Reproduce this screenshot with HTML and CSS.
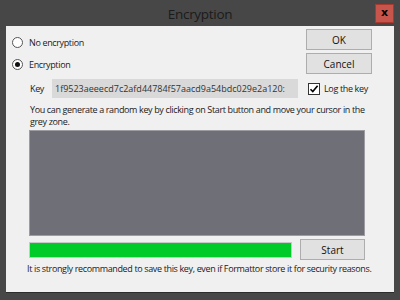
FILE: index.html
```html
<!DOCTYPE html>
<html>
<head>
<meta charset="utf-8">
<link rel="stylesheet" href="styles.css">
</head>
<body>
<div class="window">
  <div class="titlebar">
    <span class="title">Encryption</span>
    <span class="close">x</span>
  </div>
  <div class="content">
    <div class="top">
      <div class="radios">
        <label class="opt"><span class="radio"></span>No encryption</label>
        <label class="opt"><span class="radio on"></span>Encryption</label>
      </div>
      <div class="buttons">
        <div class="btn">OK</div>
        <div class="btn">Cancel</div>
      </div>
    </div>
    <div class="keyrow">
      <span class="keylabel">Key</span>
      <div class="keyfield">1f9523aeeecd7c2afd44784f57aacd9a54bdc029e2a120:</div>
      <span class="check"><svg width="10" height="10" viewBox="0 0 10 10"><path d="M1.5 5.2 L3.8 7.6 L8.6 1.8" fill="none" stroke="#000" stroke-width="1.6"/></svg></span>
      <span class="checklabel">Log the key</span>
    </div>
    <p class="info">You can generate a random key by clicking on Start button and move your cursor in the grey zone.</p>
    <div class="zone"></div>
    <div class="progressrow">
      <div class="bar"></div>
      <div class="btn start">Start</div>
    </div>
    <p class="note">It is strongly recommanded to save this key, even if Formattor store it for security reasons.</p>
  </div>
</div>
</body>
</html>
```
FILE: styles.css
```css
html, body {
  margin: 0;
  padding: 0;
}
body {
  font-family: "Open Sans", "Noto Sans", sans-serif;
  font-size: 9px;
  letter-spacing: -0.36px;
  color: #1a1a1a;
}
.window {
  width: 400px;
  height: 300px;
  background: #474747;
  display: flex;
  flex-direction: column;
}
.titlebar {
  height: 26px;
  position: relative;
  display: flex;
  align-items: center;
  justify-content: center;
}
.title {
  font-size: 13.5px;
  letter-spacing: -0.3px;
  color: #1b1b1b;
  margin-top: 1px;
}
.close {
  position: absolute;
  left: 375px;
  top: 4px;
  width: 17px;
  height: 17px;
  background: #c8554c;
  border: 1px solid #a8392f;
  color: #000;
  font-weight: bold;
  font-size: 11px;
  letter-spacing: 0;
  line-height: 15px;
  text-align: center;
  font-family: "DejaVu Sans", sans-serif;
}
.content {
  margin: 0 6px;
  height: 267px;
  background: #f0f0f0;
  border-bottom: 1px solid #2c2c2c;
  box-sizing: border-box;
}
.top {
  display: flex;
  justify-content: space-between;
  padding: 3px 22px 0 6px;
}
.radios {
  display: flex;
  flex-direction: column;
  padding-top: 2px;
}
.opt {
  height: 22px;
  display: flex;
  align-items: center;
  gap: 6px;
}
.radio {
  width: 9px;
  height: 9px;
  border: 1px solid #555;
  border-radius: 50%;
  background: #fff;
  position: relative;
}
.radio.on::after {
  content: "";
  position: absolute;
  left: 2px;
  top: 2px;
  width: 5px;
  height: 5px;
  border-radius: 50%;
  background: #111;
}
.buttons {
  display: flex;
  flex-direction: column;
  gap: 3px;
}
.btn {
  width: 64px;
  height: 19px;
  background: #e1e1e1;
  border: 1px solid #adadad;
  display: flex;
  align-items: center;
  justify-content: center;
  font-size: 10px;
  letter-spacing: 0;
  color: #111;
}
.keyrow {
  display: flex;
  align-items: center;
  height: 19px;
  margin: 4px 0 0 24px;
}
.keylabel {
  width: 22px;
}
.keyfield {
  width: 243px;
  height: 19px;
  background: #d9d9d9;
  padding-left: 3px;
  line-height: 19px;
  white-space: nowrap;
  overflow: hidden;
  color: #333;
  font-size: 9px;
  letter-spacing: 0;
}
.check {
  margin-left: 10px;
  width: 10px;
  height: 10px;
  border: 1px solid #333;
  background: #fff;
  display: flex;
}
.checklabel {
  margin-left: 4px;
}
.info {
  margin: 6px 18px 0 24px;
  line-height: 12px;
}
.zone {
  margin: 2px 0 0 23px;
  width: 334px;
  height: 104px;
  background: #6f7077;
  border: 1px solid #9c9ca2;
}
.progressrow {
  display: flex;
  align-items: center;
  margin: 3px 0 0 23px;
  gap: 8px;
}
.bar {
  width: 261px;
  height: 14px;
  background: #00cb28;
  border: 1px solid #c8c8c8;
}
.start {
  width: 63px;
}
.note {
  margin: 3px 0 0 21px;
  line-height: 12px;
  white-space: nowrap;
}
```
